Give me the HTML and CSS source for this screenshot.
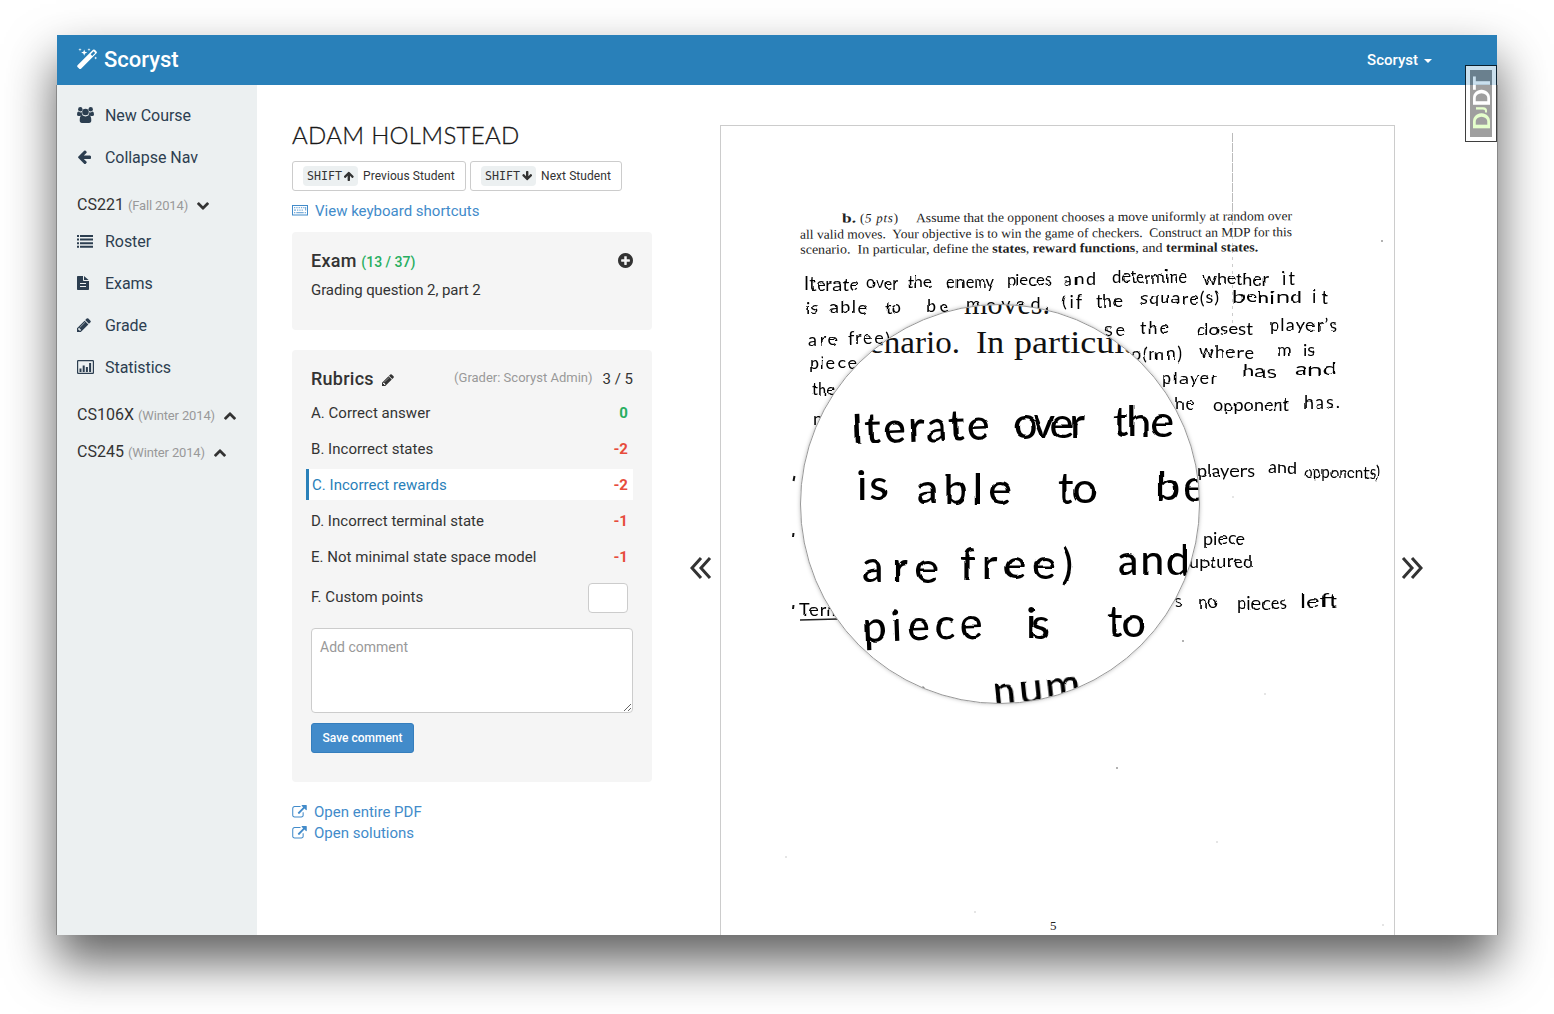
FILE: index.html
```html
<!DOCTYPE html>
<html lang="en">
<head>
<meta charset="utf-8">
<title>Scoryst</title>
<link rel="stylesheet" href="styles.css">
</head>
<body>
<svg class="sprites" aria-hidden="true">
  <symbol id="pencil" viewBox="128 128 1536 1536"><path d="M491 1536l91-91-235-235-91 91v107h128v128h107zm523-928q0-22-22-22-10 0-17 7l-542 542q-7 7-7 17 0 22 22 22 10 0 17-7l542-542q7-7 7-17zm-54-192l416 416-832 832h-416v-416zm683 96q0 53-37 90l-166 166-416-416 166-165q36-38 90-38 53 0 91 38l235 234q37 39 37 91z"/></symbol>
  <symbol id="arrow" viewBox="64 192 1600 1472"><path d="M1664 896v128q0 53-32.5 90.5t-84.5 37.5h-704l293 294q38 36 38 90t-38 90l-75 76q-37 37-90 37-52 0-91-37l-651-652q-37-37-37-90 0-52 37-91l651-650q38-38 91-38 52 0 90 38l75 74q38 38 38 91t-38 91l-293 293h704q52 0 84.5 37.5t32.5 90.5z"/></symbol>
  <symbol id="chevron" viewBox="90 533 1612 1035"><path d="M1683 808l-742 741q-19 19-45 19t-45-19l-742-741q-19-19-19-45.5t19-45.5l166-165q19-19 45-19t45 19l531 531 531-531q19-19 45-19t45 19l166 165q19 19 19 45.5t-19 45.5z"/></symbol>
  <symbol id="external" viewBox="0 0 1792 1600"><path d="M1408 928v320q0 119-84.5 203.5t-203.5 84.5h-832q-119 0-203.5-84.5t-84.5-203.5v-832q0-119 84.5-203.5t203.5-84.5h704q14 0 23 9t9 23v64q0 14-9 23t-23 9h-704q-66 0-113 47t-47 113v832q0 66 47 113t113 47h832q66 0 113-47t47-113v-320q0-14 9-23t23-9h64q14 0 23 9t9 23zm384-864v512q0 26-19 45t-45 19-45-19l-176-176-652 652q-10 10-23 10t-23-10l-114-114q-10-10-10-23t10-23l652-652-176-176q-19-19-19-45t19-45 45-19h512q26 0 45 19t19 45z"/></symbol>
  <symbol id="plus" viewBox="128 128 1536 1536"><path d="M1344 960v-128q0-26-19-45t-45-19h-256v-256q0-26-19-45t-45-19h-128q-26 0-45 19t-19 45v256h-256q-26 0-45 19t-19 45v128q0 26 19 45t45 19h256v256q0 26 19 45t45 19h128q26 0 45-19t19-45v-256h256q26 0 45-19t19-45zm320-64q0 209-103 385.5t-279.5 279.5-385.5 103-385.5-103-279.5-279.5-103-385.5 103-385.5 279.5-279.5 385.5-103 385.5 103 279.5 279.5 103 385.5z"/></symbol>
  <symbol id="users" viewBox="0 0 17 16"><circle cx="3.3" cy="2.3" r="2.2"/><circle cx="13.7" cy="2.3" r="2.2"/><circle cx="8.5" cy="5" r="3.3"/><path d="M1.2 4.6Q3.3 6 4.6 5Q4.700 7 5.600 8.200Q4 8 3.200 9H1.700Q0 9 0 7.400Q0 5.200 1.200 4.600zM15.800 4.600Q13.700 6 12.400 5Q12.300 7 11.400 8.200Q13 8 13.800 9H15.300Q17 9 17 7.400Q17 5.200 15.800 4.600zM5.300 8.300Q8.500 10.500 11.700 8.300Q14.300 8.300 14.300 13.300Q14.300 16 12 16H5Q2.700 16 2.700 13.300Q2.700 8.300 5.300 8.300z"/></symbol>
  <symbol id="list" viewBox="0 0 16 13"><path d="M0 0h2v2H0zM3 0h13v2H3zM0 3.600h2v2H0zM3 3.600h13v2H3zM0 7.200h2v2H0zM3 7.200h13v2H3zM0 10.800h2v2H0zM3 10.800h13v2H3z"/></symbol>
  <symbol id="file" viewBox="0 0 12 14"><path fill-rule="evenodd" d="M.8 0H6v4.200q0 .8.800.8H12v8.200q0 .8-.8.800H.8Q0 14 0 13.200V.8Q0 0 .8 0zM7 0l4.600 4H7zM3 7v1h6V7zM3 10v1h6v-1z"/></symbol>
  <symbol id="chart" viewBox="0 0 17 14"><path fill-rule="evenodd" d="M1.200 0h14.600Q17 0 17 1.200v11.600q0 1.200-1.200 1.200H1.200Q0 14 0 12.800V1.200Q0 0 1.200 0zM1.200 1.200v11.600h14.600V1.200zM2.500 8.500h2V12h-2zM5.700 5.500h2V12h-2zM8.900 7h2v5h-2zM12.100 3h2v9h-2z"/></symbol>
  <symbol id="wand" viewBox="0 0 21 21"><path fill-rule="evenodd" d="M.5 17.300L16 1.800q.9-.8 1.800 0l1.700 1.700q.8.900 0 1.800L4 20.800q-.9.600-1.700-.1L.5 19q-.6-.8 0-1.700zM13.600 6.300l1.600 1.600 3-3-1.600-1.600z"/><path d="M7.200 1.500l.8 2.300 2.300.8-2.300.8-.8 2.300-.8-2.300-2.300-.8 2.300-.8zM3 0l.4 1.300 1.300.4-1.300.4L3 3.400l-.4-1.300-1.300-.4 1.300-.4zM12 0l.4 1.200 1.200.4-1.200.4L12 3.200 11.600 2l-1.200-.4 1.200-.4zM18.700 8.500l.4 1.100 1.100.4-1.100.4-.4 1.100-.4-1.100-1.100-.4 1.100-.4z"/></symbol>
  <symbol id="keyboard" viewBox="0 0 16 11"><path fill-rule="evenodd" d="M0 0h16v10.500H0zM1 1v8.500h14V1z"/><path d="M2 2h1.300v1.300H2zM4.300 2h1.300v1.300H4.300zM6.600 2h1.300v1.300H6.600zM8.900 2h1.300v1.300H8.900zM11.200 2h1.300v1.300h-1.300zM13 2h1.200v3.500H13zM2 4.500h2v1.300H2zM5 4.500h1.300v1.300H5zM7.300 4.500h1.300v1.300H7.300zM9.600 4.500h1.300v1.300H9.600zM2 7h1.300v1.300H2zM4.300 7h7.400v1.300H4.300zM12.700 7H14v1.300h-1.300z" opacity=".7"/></symbol>
  <symbol id="double" viewBox="0 0 22 24"><path d="M2 2L11 12 2 22M11 2L20 12 11 22" fill="none" stroke="currentColor" stroke-width="3"/></symbol>
</svg>

<div class="window">
  <header class="topbar">
    <a class="brand"><svg class="wand"><use href="#wand"/></svg><span>Scoryst</span></a>
    <a class="account">Scoryst<i class="caret"></i></a>
  </header>

  <div class="body">
    <nav class="sidebar">
      <a class="item"><span class="ico"><svg width="17" height="16"><use href="#users"/></svg></span>New Course</a>
      <a class="item"><span class="ico"><svg width="14" height="14"><use href="#arrow"/></svg></span>Collapse Nav</a>
      <div class="course">CS221 <small>(Fall 2014)</small><svg class="chev"><use href="#chevron"/></svg></div>
      <div class="sub">
        <a class="item"><span class="ico"><svg width="16" height="13"><use href="#list"/></svg></span>Roster</a>
        <a class="item"><span class="ico"><svg width="12" height="14"><use href="#file"/></svg></span>Exams</a>
        <a class="item"><span class="ico"><svg width="14" height="14"><use href="#pencil"/></svg></span>Grade</a>
        <a class="item"><span class="ico"><svg width="17" height="14"><use href="#chart"/></svg></span>Statistics</a>
      </div>
      <div class="course">CS106X <small>(Winter 2014)</small><svg class="chev up"><use href="#chevron"/></svg></div>
      <div class="course">CS245 <small>(Winter 2014)</small><svg class="chev up"><use href="#chevron"/></svg></div>
    </nav>

    <main class="main">
      <section class="panel">
        <h1>ADAM HOLMSTEAD</h1>
        <div class="buttons">
          <a class="btn prev"><kbd>SHIFT<svg class="key-up"><use href="#arrow"/></svg></kbd>Previous Student</a>
          <a class="btn next"><kbd>SHIFT<svg class="key-down"><use href="#arrow"/></svg></kbd>Next Student</a>
        </div>
        <a class="shortcuts"><svg width="16" height="11"><use href="#keyboard"/></svg>View keyboard shortcuts</a>

        <div class="card exam">
          <div class="card-head"><h2>Exam <small>(13 / 37)</small></h2><svg width="15" height="15"><use href="#plus"/></svg></div>
          <p>Grading question 2, part 2</p>
        </div>

        <div class="card rubrics">
          <div class="card-head"><h2>Rubrics</h2><svg class="edit"><use href="#pencil"/></svg><span class="grader">(Grader: Scoryst Admin)</span><span class="score">3 / 5</span></div>
          <ul>
            <li><span>A. Correct answer</span><b class="good">0</b></li>
            <li><span>B. Incorrect states</span><b>-2</b></li>
            <li class="active"><span>C. Incorrect rewards</span><b>-2</b></li>
            <li><span>D. Incorrect terminal state</span><b>-1</b></li>
            <li><span>E. Not minimal state space model</span><b>-1</b></li>
            <li class="custom"><span>F. Custom points</span><input type="text"></li>
          </ul>
          <textarea placeholder="Add comment"></textarea>
          <button class="save">Save comment</button>
        </div>

        <div class="links">
          <a><svg width="15" height="13"><use href="#external"/></svg>Open entire PDF</a>
          <a><svg width="15" height="13"><use href="#external"/></svg>Open solutions</a>
        </div>
      </section>

      <svg class="pager back"><use href="#double"/></svg>
      <div class="page">
        <svg class="scan" viewBox="721 126 673 809">
          <defs>
            <clipPath id="glass"><circle cx="1000" cy="504" r="199"/></clipPath>
            <filter id="rough" x="-5%" y="-5%" width="110%" height="110%"><feTurbulence type="fractalNoise" baseFrequency=".05" numOctaves="1" seed="4"/><feDisplacementMap in="SourceGraphic" scale="5" xChannelSelector="R" yChannelSelector="G"/></filter>
            <filter id="lift" x="-5%" y="-5%" width="110%" height="110%"><feDropShadow dx="0" dy="0" stdDeviation="2" flood-opacity=".3"/></filter>
          </defs>
          <path d="M1232.500 133V215" stroke="#bbb" stroke-dasharray="9 1"/>
          <path d="M1232.500 215V325" stroke="#ccc" stroke-dasharray="3 4"/>
          <g class="print" transform="rotate(-.3 1046 220)">
            <text x="842" y="221.500" textLength="14" lengthAdjust="spacingAndGlyphs" class="bold">b.</text>
            <text x="860" y="221.500" textLength="38"><tspan>(</tspan><tspan class="ital">5 pts</tspan><tspan>)</tspan></text>
            <text x="916" y="221.500" textLength="376" lengthAdjust="spacingAndGlyphs">Assume that the opponent chooses a move uniformly at random over</text>
            <text x="800" y="237.500" textLength="492" lengthAdjust="spacingAndGlyphs">all valid moves.&#160; Your objective is to win the game of checkers.&#160; Construct an MDP for this</text>
            <text x="800" y="252.500" textLength="458" lengthAdjust="spacingAndGlyphs">scenario.&#160; In particular, define the <tspan class="bold">states</tspan>, <tspan class="bold">reward functions</tspan>, and <tspan class="bold">terminal states.</tspan></text>
          </g>
          <g class="hand" filter="url(#rough)">
            <text x="804" y="290" textLength="55">Iterate</text><text x="867" y="289" textLength="31" lengthAdjust="spacingAndGlyphs">over</text><text x="907" y="288" textLength="25" lengthAdjust="spacingAndGlyphs">the</text><text x="947" y="288" textLength="48" lengthAdjust="spacingAndGlyphs">enemy</text><text x="1006" y="286" textLength="46" lengthAdjust="spacingAndGlyphs">pieces</text><text x="1064" y="285" textLength="32">and</text><text x="1112" y="283" textLength="75" lengthAdjust="spacingAndGlyphs">determine</text><text x="1203" y="285" textLength="65">whether</text><text x="1282" y="285" textLength="13">it</text>
            <text x="806" y="314" textLength="13">is</text><text x="830" y="314" textLength="37">able</text><text x="885" y="314" textLength="16">to</text><text x="926" y="313" textLength="23">be</text><text x="966" y="310" textLength="84">moved.</text><text x="1061" y="308" textLength="21">(if</text><text x="1096" y="307" textLength="27">the</text><text x="1140" y="304" textLength="79">square(s)</text><text x="1232" y="303" textLength="70" lengthAdjust="spacingAndGlyphs">behind</text><text x="1312" y="303" textLength="16">it</text>
            <text x="808" y="346" textLength="30">are</text><text x="847" y="344" textLength="43">free)</text><text x="1105" y="336" textLength="19">se</text><text x="1140" y="334" textLength="30">the</text><text x="1196" y="335" textLength="57" lengthAdjust="spacingAndGlyphs">closest</text><text x="1269" y="331" textLength="68">player’s</text>
            <text x="809" y="369" textLength="48">piece</text><text x="1131" y="360" textLength="51">o(mn)</text><text x="1200" y="358" textLength="53">where</text><text x="1277" y="356" textLength="16">m</text><text x="1303" y="356" textLength="12">is</text>
            <text x="812" y="395" textLength="24" lengthAdjust="spacingAndGlyphs">the</text><text x="1162" y="384" textLength="55">player</text><text x="1243" y="377" textLength="33" lengthAdjust="spacingAndGlyphs">has</text><text x="1295" y="375" textLength="42" lengthAdjust="spacingAndGlyphs">and</text>
            <text x="813" y="425">n</text><text x="1174" y="410" textLength="20">he</text><text x="1213" y="411" textLength="77">opponent</text><text x="1303" y="408" textLength="37">has.</text>
            <text x="1198" y="477" textLength="56">players</text><text x="1268" y="474" textLength="29">and</text><text x="1304" y="478" textLength="75" lengthAdjust="spacingAndGlyphs">opponents)</text>
            <text x="1203" y="545" textLength="42">piece</text><text x="1189" y="568" textLength="64">uptured</text>
            <text x="1174" y="607">s</text><text x="1198" y="608" textLength="20">no</text><text x="1237" y="609" textLength="50">pieces</text><text x="1300" y="607" textLength="37" lengthAdjust="spacingAndGlyphs">left</text>
            <text x="800" y="616" textLength="42">Term</text>
          </g>
          <path d="M800 620l38-1" stroke="#222" stroke-width="1.400"/>
          <path d="M794.500 476l-1 5M793.500 533l-.5 4M793.500 605l-.5 4" stroke="#111" stroke-width="2"/>
          <g fill="#999"><circle cx="1382" cy="241" r="1"/><circle cx="1183" cy="641" r="1"/><circle cx="1117" cy="768" r="1"/></g>
          <g fill="#ddd"><circle cx="1265" cy="694" r="1"/><circle cx="786" cy="857" r="1"/><circle cx="1217" cy="842" r="1"/><circle cx="975" cy="912" r="1"/><circle cx="1383" cy="925" r="1"/><circle cx="1233" cy="497" r="1"/></g>
          <text class="print" x="1050" y="930">5</text>
          <circle cx="1000" cy="504" r="199.500" fill="#fff" filter="url(#lift)"/>
          <g clip-path="url(#glass)">
            <g class="print zoomed">
              <text x="964" y="314" textLength="86" lengthAdjust="spacingAndGlyphs">moves.</text>
              <text x="869" y="353" textLength="91" lengthAdjust="spacingAndGlyphs">enario.</text><text x="976" y="353" textLength="28" lengthAdjust="spacingAndGlyphs">In</text><text x="1014" y="353" textLength="146" lengthAdjust="spacingAndGlyphs">particular,</text>
            </g>
            <g class="hand zoomed" filter="url(#rough)">
              <text x="852" y="444" textLength="138" transform="rotate(-2 852 442)">Iterate</text><text x="1013" y="438" textLength="72">over</text><text x="1113" y="437" textLength="60">the</text>
              <text x="857" y="500" textLength="31">is</text><text x="917" y="504" textLength="94">able</text><text x="1058" y="503" textLength="39">to</text><text x="1156" y="501" textLength="50">be</text>
              <text x="862" y="582" textLength="76">are</text><text x="960" y="579" textLength="113">free)</text><text x="1117" y="575" textLength="73">and</text>
              <text x="863" y="642" textLength="120" transform="rotate(-2 863 642)">piece</text><text x="1026" y="639" textLength="24">is</text><text x="1107" y="637" textLength="39">to</text>
              <text x="994" y="707" textLength="88" transform="rotate(-6 994 705)">num</text>
            </g>
            <circle cx="923" cy="688" r="1.500"/>
          </g>
          <circle cx="1000" cy="504" r="199.500" fill="none" stroke="#999"/>
        </svg>
      </div>
      <svg class="pager"><use href="#double"/></svg>
    </main>
  </div>
  <div class="debug"><div class="debug-in"><span class="dj">D<small>J</small></span>DT</div></div>
</div>
</body>
</html>
```
FILE: styles.css
```css
* { box-sizing: border-box; }
body { margin: 0; height: 1014px; overflow: hidden; background: #fff; padding: 35px 57px; font-family: Roboto, "Liberation Sans", sans-serif; font-size: 15px; color: #333; }
svg { fill: currentColor; flex: none; display: block; }
.sprites { position: absolute; width: 0; height: 0; }
.window { position: relative; width: 1440px; height: 900px; display: flex; flex-direction: column; background: #fff; box-shadow: 0 26px 46px 1px rgba(0,0,0,.62); }
.topbar { height: 50px; flex: none; background: #2980b9; color: #fff; display: flex; justify-content: space-between; padding: 0 65px 0 20px; }
.brand { display: flex; align-items: center; font-size: 22px; font-weight: 500; padding-bottom: 2px; }
.wand { width: 21px; height: 21px; margin: -2px 6px 0 0; }
.account { display: flex; align-items: center; font-weight: 500; font-size: 15px; }
.caret { border: 4px solid transparent; border-top-color: #fff; border-bottom: 0; margin: 2px 0 0 6px; }
.body { flex: 1; display: flex; min-height: 0; box-shadow: -1px 0 #888, 1px 0 #888; }
.sidebar { width: 200px; background: #ecf0f1; padding: 9px 20px; flex: none; }
.item { display: flex; align-items: center; height: 42px; font-size: 16px; letter-spacing: -.05px; color: #2c3e50; }
.ico { width: 28px; }
.course { display: flex; align-items: baseline; padding-top: 16px; line-height: 22px; height: 37px; font-size: 16px; white-space: nowrap; }
.course small { font-size: 13px; letter-spacing: -.15px; color: #999; margin-left: 4px; }
.chev { width: 12px; height: 8px; margin-left: 9px; }
.up { transform: rotate(180deg); }
.sub { margin-top: 5px; }
.main { flex: 1; display: flex; padding-left: 35px; min-width: 0; }
.panel { width: 360px; flex: none; padding-top: 35px; }
h1 { margin: 0; height: 41px; font: 300 24px/29px Lato, sans-serif; white-space: nowrap; letter-spacing: .3px; color: #111; -webkit-text-stroke: .3px #222; }
.buttons { display: flex; gap: 4px; }
.btn { height: 30px; border: 1px solid #ccc; border-radius: 3px; padding: 0 10px; display: flex; align-items: center; font-size: 12px; white-space: nowrap; letter-spacing: .07px; }
.prev { width: 174px; }
.next { width: 152px; }
kbd { display: flex; align-items: center; background: #ecf0f1; border-radius: 4px; height: 20px; width: 55px; padding-left: 4px; margin-right: 5px; font: 11.600px "DejaVu Sans Mono", monospace; letter-spacing: 0; }
kbd svg { width: 10px; height: 10px; margin-left: 2px; }
.key-up { transform: rotate(90deg); }
.key-down { transform: rotate(-90deg); }
.shortcuts { display: flex; align-items: center; gap: 7px; color: #428bca; height: 41px; padding-bottom: 2px; }
.card { background: #f5f5f5; border-radius: 4px; padding: 18px 19px; }
.card-head { display: flex; align-items: center; height: 20px; }
h2 { margin: 0; font-size: 18px; font-weight: 500; letter-spacing: .25px; }
.exam { height: 98px; margin-bottom: 20px; }
.exam .card-head { justify-content: space-between; }
.exam h2 small { font-size: 14px; letter-spacing: 0; color: #27ae60; }
.exam p { margin: 11px 0 0; line-height: 18px; letter-spacing: -.07px; }
.rubrics { height: 432px; }
.edit { width: 12px; height: 12px; margin: 3px 0 0 8px; }
.grader { margin-left: auto; color: #999; font-size: 13px; margin-top: -1px; }
.score { margin-left: 10px; padding-top: 1px; }
ul { list-style: none; margin: 9px 0 0; padding: 0; }
li { display: flex; justify-content: space-between; align-items: center; height: 31px; margin-bottom: 5px; padding-right: 5px; letter-spacing: .03px; }
li b { color: #e74c3c; }
li b.good { color: #27ae60; }
li.active { background: #fff; color: #2980b9; margin-left: -5px; padding-left: 3px; border-left: 3px solid #2980b9; }
.custom { height: 35px; margin-top: 11px; margin-bottom: 0; align-items: flex-start; line-height: 28px; }
input { width: 40px; height: 30px; border: 1px solid #ccc; border-radius: 4px; background: #fff; padding: 0; }
textarea { display: block; width: 322px; height: 85px; margin-top: 10px; border: 1px solid #ccc; border-radius: 4px; padding: 8px; font: 14px/20px Roboto, sans-serif; background: #fff; }
textarea::placeholder { color: #999; }
.save { display: block; margin-top: 10px; width: 103px; height: 30px; padding: 0; background: #428bca; border: 1px solid #357ebd; border-radius: 3px; color: #fff; font: 500 12px Roboto, sans-serif; }
.links { margin-top: 19px; color: #428bca; }
.links a { display: flex; align-items: center; gap: 7px; height: 21px; }
.pager { width: 22px; height: 24px; margin: 471px 8px 0 6px; }
.back { transform: scaleX(-1); margin: 471px 8px 0 38px; }
.page { width: 675px; height: 810px; margin-top: 40px; border: 1px solid #ccc; border-bottom: 0; flex: none; }
.scan { width: 673px; height: 809px; }
.print { font-family: "Liberation Serif", serif; font-size: 13px; fill: #222; }
.bold { font-weight: bold; }
.ital { font-style: italic; }
.hand { font-family: Lato, sans-serif; font-size: 18px; fill: #000; }
.print.zoomed { font-size: 32px; fill: #111; }
.hand.zoomed { font-size: 43px; font-weight: 500; }
.debug { position: absolute; right: 0; top: 30px; width: 32px; height: 77px; border: 1px solid #000; background: #fff; opacity: .75; padding: 4px 0 4px 4px; }
.debug-in { height: 67px; background: #808080; color: #fff; writing-mode: vertical-rl; transform: rotate(180deg); font: 900 23px/22px Lato, sans-serif; padding: 7px 0; white-space: nowrap; letter-spacing: -.3px; }
.dj { color: #dfb; }
.dj small { font-size: 15px; }
```
